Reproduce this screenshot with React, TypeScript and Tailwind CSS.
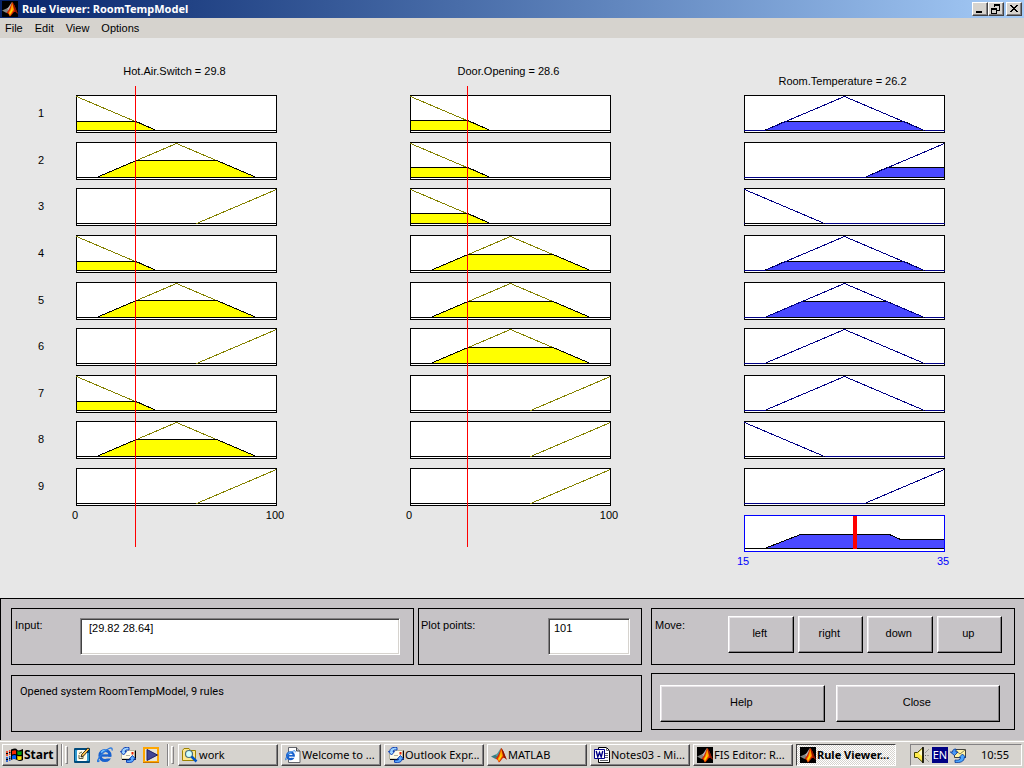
import { useState } from "react";
import type { ReactNode } from "react";
import clsx from "clsx";

type Shape = "low" | "mid" | "high";
type Rule = { hot: Shape; door: Shape; room: Shape };

const HOT = 29.82;
const DOOR = 28.64;

const rules: Rule[] = [
  { hot: "low", door: "low", room: "mid" },
  { hot: "mid", door: "low", room: "high" },
  { hot: "high", door: "low", room: "low" },
  { hot: "low", door: "mid", room: "mid" },
  { hot: "mid", door: "mid", room: "mid" },
  { hot: "high", door: "mid", room: "mid" },
  { hot: "low", door: "high", room: "mid" },
  { hot: "mid", door: "high", room: "low" },
  { hot: "high", door: "high", room: "high" },
];

// membership degree for v in 0..100
function degree(shape: Shape, v: number) {
  if (shape === "low") return Math.max(0, 1 - v / 40);
  if (shape === "high") return Math.max(0, (v - 60) / 40);
  return Math.max(0, 1 - Math.abs(v - 50) / 40);
}

const outlines: Record<Shape, [number, number][]> = {
  low: [[0, 1], [80, 0]],
  mid: [[20, 0], [100, 1], [180, 0]],
  high: [[120, 0], [200, 1]],
};

function clipped(shape: Shape, level: number): [number, number][] {
  const w = 80 * level;
  if (shape === "low") return [[0, 0], [0, level], [80 - w, level], [80, 0]];
  if (shape === "high") return [[120, 0], [120 + w, level], [200, level], [200, 0]];
  return [[20, 0], [20 + w, level], [180 - w, level], [180, 0]];
}

const toPoints = (pts: [number, number][]) =>
  pts.map(([x, y]) => `${x + 0.5},${Math.round(35 - y * 34) + 0.5}`).join(" ");

const raised =
  "border border-t-white border-l-white border-r-[#424142] border-b-[#424142] shadow-[inset_-1px_-1px_0_#848284]";
const figButton =
  "h-[37px] pb-[2px] pr-[2px] bg-[#c6c3c6] border border-t-white border-l-white border-r-black border-b-black shadow-[inset_-1px_-1px_0_#848284,inset_1px_1px_0_#e7e3e7]";
const sunken =
  "border border-t-[#848284] border-l-[#848284] border-r-white border-b-white shadow-[inset_1px_1px_0_#424142,inset_-1px_-1px_0_#d6d3ce]";

function Plot({ shape, level, output }: { shape: Shape; level: number; output?: boolean }) {
  const line = output ? "#000084" : "#848200";
  return (
    <svg
      viewBox="0 0 201 38"
      preserveAspectRatio="none"
      shapeRendering="crispEdges"
      className="block w-full h-[38px]"
    >
      <rect x="0.5" y="0.5" width="200" height="37" fill="white" stroke="black" />
      <path d="M0 35.5H201" stroke={output ? line : "black"} />
      <polygon points={toPoints(clipped(shape, level))} fill={output ? "#4a49ff" : "#ffff00"} stroke="black" />
      <polyline points={toPoints(outlines[shape])} fill="none" stroke={line} />
      {!output && level > 0 && (
        <polygon points={toPoints(clipped(shape, level))} fill="none" stroke="black" />
      )}
    </svg>
  );
}

function ResultPlot() {
  return (
    <svg
      viewBox="0 0 201 37"
      preserveAspectRatio="none"
      shapeRendering="crispEdges"
      className="block w-full h-[37px]"
    >
      <rect x="0.5" y="0.5" width="200" height="36" fill="white" stroke="#0000ff" />
      <path
        d="M0.5 33.5H20.5L56.5 19.5H145.5L156.5 24.5H200V33.5H20.5"
        fill="#4a49ff"
        stroke="black"
      />
      <path d="M200.5 0V37" stroke="#0000ff" />
      <rect x="109" y="1" width="4" height="33" fill="#ff0000" />
    </svg>
  );
}

function AxisLabels({ min, max, className }: { min: number; max: number; className?: string }) {
  return (
    <div className={clsx("flex justify-between -ml-[11px] -mr-[8px] leading-[14px]", className)}>
      <span className="w-5 text-center">{min}</span>
      <span className="w-5 text-center">{max}</span>
    </div>
  );
}

function InputColumn({ name, value, pick }: { name: string; value: number; pick: "hot" | "door" }) {
  return (
    <div className="relative">
      <h2 className="h-[57px] pb-[17px] pr-1 flex items-end justify-center leading-[14px] whitespace-nowrap">
        {name} = {value.toFixed(1)}
      </h2>
      <div className="h-[411px] flex flex-col justify-between">
        {rules.map((r, i) => (
          <Plot key={i} shape={r[pick]} level={degree(r[pick], value)} />
        ))}
      </div>
      <AxisLabels min={0} max={100} className="mt-[2px]" />
      {/* current value marker */}
      <div className="absolute top-12 -ml-px w-px h-[461px] bg-[#ff0000]" style={{ left: `${value}%` }} />
    </div>
  );
}

function MatlabIcon({ dark }: { dark?: boolean }) {
  return (
    <svg viewBox="0 0 16 16" className="w-4 h-4 shrink-0">
      {dark && <path d="M0 0h16v16H0z" fill="#000" />}
      <path d="M0 9.5 4.5 7.5 7 9.5 4.5 12z" fill={dark ? "#848684" : "#3a7d84"} />
      <path d="M4.5 7.5C7 7 8 3 10.2 1L8.5 8 7 10z" fill={dark ? "#b5b2b5" : "#4a9a9c"} />
      <path d="M10.2 1C8.5 4 8.7 7 4.5 12c2 0 2.2 1.5 3.4 3.5 2.2-1 3.2-4.8 5.1-4.7 1 .1 2 1 3 2C14 9 12.5 3 10.2 1z" fill="#d62800" />
      <path d="M10.2 1C9.5 5 9 8 6.5 12l1.4 3c1.8-2 2.6-5 4.1-6z" fill="#ff8200" />
      <path d="M10.2 4 9.2 9 7.3 12l.7 1.5 2.6-4z" fill="#ffdb00" />
      <path d="M10.2 1C12.5 3 14 9 16 13c-1.2-1.2-2-2-3-2.2z" fill="#8c1400" />
    </svg>
  );
}

function IeIcon({ page }: { page?: boolean }) {
  return (
    <svg viewBox="0 0 16 16" className="w-4 h-4 shrink-0">
      {page && <path d="M3.5.5h8L15 4v11.5H3.5z" fill="#fff" stroke="#63656b" />}
      {page && <path d="M11.5.5V4H15" fill="#c6c3c6" stroke="#42454a" />}
      <g transform={page ? "translate(0 3) scale(.68)" : undefined}>
        <circle cx="8" cy="8.5" r="5" fill="none" stroke="#1861ce" strokeWidth="3.2" />
        <path d="M4 8.5h9" stroke="#1861ce" strokeWidth="2.4" />
        <path d="M10 9.9h6v1.6h-6z" fill={page ? "#fff" : "#d6d3ce"} />
        <path d="M4 5.5Q6 3 9.5 3.3" stroke="#73c3ff" strokeWidth="1.3" fill="none" />
        <path d="M2.5 13.5C-1 17 .5 11 6 6S16-1 15 3.5" stroke="#2979de" strokeWidth="1.3" fill="none" />
      </g>
    </svg>
  );
}

function OutlookIcon() {
  return (
    <svg viewBox="0 0 16 16" className="w-4 h-4 shrink-0">
      <path d="M1.5 3.5h13v8.500h-13z" fill="#fffbe7" stroke="#b5b29c" />
      <path d="M15.5 3.5v9H2" stroke="#000" fill="none" />
      <path d="M6 8.5h4" stroke="#b5b29c" />
      <path d="M11.5 5h2v2.500h-2z" fill="#e72000" />
      <path d="M9 .5C5 0 1.800 1 1.800 4.500H.4L3.500 8 6.600 4.500H5C5 3 6.500 2.800 9 3z" fill="#9cd3ff" stroke="#1041b5" />
      <path d="M6.500 15.300c4.500.7 7.500-.3 7.500-3.300h1.500L12.500 8.500 9.300 12h1.500c0 1.300-2 1.300-4.300 1z" fill="#5aaaff" stroke="#1041b5" />
    </svg>
  );
}

function DesktopIcon() {
  return (
    <svg viewBox="0 0 16 16" className="w-4 h-4 shrink-0">
      <rect x="0" y="1" width="16" height="15" rx="1" fill="#004a7b" />
      <path d="M1 3h3v11H1zM13 6h2v8h-2z" fill="#319ace" />
      <path d="M3.5 3.5h9v10h-9z" fill="#fffbde" stroke="#fff" />
      <path d="M5 6.5 8 5M5 8v3.5h4V8" stroke="#63614a" fill="none" />
      <path d="m7 10 .8-2.7L14 .8l1.500 1.500L9.500 9z" fill="#ffc34a" stroke="#000" strokeWidth=".8" />
    </svg>
  );
}

function MediaIcon() {
  return (
    <svg viewBox="0 0 16 16" className="w-4 h-4 shrink-0">
      <path d="M1 1h14v14H1z" fill="#e7e3d6" stroke="#ffa600" strokeWidth="2" />
      <path d="M0 15.5h16" stroke="#c67500" />
      <path d="M4 2.5 14.5 8 4 13.5z" fill="#424594" stroke="#212063" />
    </svg>
  );
}

function FolderIcon() {
  return (
    <svg viewBox="0 0 16 16" className="w-4 h-4 shrink-0">
      <path d="M.5 3.5 2 1.5h5l1.500 2h5v10H.5z" fill="#ffe78c" stroke="#9c8200" />
      <circle cx="7" cy="7" r="3.5" fill="#ceffff" stroke="#4a6d7b" strokeWidth="1.2" />
      <path d="m9.5 9.5 5 5" stroke="#0055c6" strokeWidth="2.5" />
    </svg>
  );
}

function WordIcon() {
  return (
    <svg viewBox="0 0 16 16" className="w-4 h-4 shrink-0">
      <path d="M4.5.5h8l3 3v12h-11z" fill="#fff" stroke="#000" />
      <path d="M12.5.5v3h3M11 6.5h3M11 8.5h3M11 10.5h3M6 13.5h8" stroke="#63656b" fill="none" />
      <path d="M.5 2.5h10v9H.5z" fill="#fff" stroke="#000084" />
      <path d="m2.200 4 1.600 6L5.500 5.500 7.200 10l1.600-6" stroke="#000084" strokeWidth="1.4" fill="none" />
    </svg>
  );
}

function FlagIcon() {
  return (
    <svg viewBox="0 0 17 16" className="w-[17px] h-4 shrink-0">
      <path d="M5 2.5Q10 .5 11 2.5T17 2v11Q14 15 11 13t-6 0z" fill="#000" />
      <path d="M6 4q2.500-1.300 4-.5v3.700Q8 6.500 6 7.500z" fill="#f72800" />
      <path d="M11.300 4q2.200 1 4.300 0v3.700q-2 .8-4.300-.2z" fill="#00a608" />
      <path d="M6 8.700q2.500-1 4-.3v3.700q-2-.8-4 .2z" fill="#0061ff" />
      <path d="M11.300 8.700q2.200 1 4.300.2v3.700q-2 .8-4.300-.2z" fill="#ffdf00" />
      <path d="M3 4h1.500M3 7h1.500M0 5h2M0 8h2" stroke="#f72800" strokeWidth="1.5" />
      <path d="M3 10h1.500M3 13h1.500M0 11h2M0 14h2" stroke="#0041c6" strokeWidth="1.5" />
      <path d="M3 5.500h1.500M0 6.500h2M3 11.500h1.500M0 12.500h2" stroke="#000" />
    </svg>
  );
}

function SpeakerIcon() {
  return (
    <svg viewBox="0 0 16 16" className="w-4 h-4 shrink-0">
      <path d="M.5 5.5h3L9 .5v15l-5.500-5h-3z" fill="#ffeb4a" stroke="#424100" />
      <path d="M9 0v16" stroke="#000" strokeWidth="1.5" />
      <path d="m4.500 6 3.500-3.500V9z" fill="#fffbce" />
      <path d="M11 8.500h1M13.500 8.500h1M11.500 5.500l1-1M13.500 3.500l1-1M11.500 11.500l1 1M13.500 13.500l1 1" stroke="#636163" />
    </svg>
  );
}

function TrayMailIcon() {
  return (
    <svg viewBox="0 0 16 16" className="w-4 h-4 shrink-0">
      <path d="M4.500 2.500h11v8h-11z" fill="#fff3a5" stroke="#42413a" />
      <path d="m5 3 5 4 5-4" fill="none" stroke="#84825a" />
      <path d="M6.500 5C4 5 3 6 3 8H.8L5 11.500 8.500 8h-2z" fill="#4a9af7" stroke="#003494" strokeWidth=".8" transform="translate(-.5 -3)" />
      <path d="M5 13c3 .5 5.500 0 5.500-2.500H9L12.500 7l3.300 3.500h-1.500c0 4-4 5.500-9.300 5z" fill="#4aa6ff" stroke="#003494" strokeWidth=".8" />
    </svg>
  );
}

function CaptionButton({ label, children }: { label: string; children: ReactNode }) {
  return (
    <button aria-label={label} className={clsx("w-4 h-[14px] bg-[#d6d3ce] flex items-center justify-center", raised)}>
      <svg viewBox="0 0 12 10" className="w-3 h-[10px]" shapeRendering="crispEdges" fill="none" stroke="black">
        {children}
      </svg>
    </button>
  );
}

const tasks: { label: string; icon: ReactNode; active?: boolean }[] = [
  { label: "work", icon: <FolderIcon /> },
  { label: "Welcome to ...", icon: <IeIcon page /> },
  { label: "Outlook Expr...", icon: <OutlookIcon /> },
  { label: "MATLAB", icon: <MatlabIcon /> },
  { label: "Notes03 - Mi...", icon: <WordIcon /> },
  { label: "FIS Editor: R...", icon: <MatlabIcon dark /> },
  { label: "Rule Viewer...", icon: <MatlabIcon dark />, active: true },
];

function Taskbar() {
  return (
    <footer className="h-7 bg-[#d6d3ce] border-t border-[#d6d3ce] shadow-[inset_0_1px_0_#fff] pt-[3px] pl-[2px] pr-[2px] flex items-start font-['Noto_Sans',sans-serif] text-[11px] leading-[14px]">
      <button className={clsx("w-14 h-[22px] shrink-0 flex items-center pl-[3px] gap-px font-bold text-[12px]", raised)}>
        <FlagIcon />
        Start
      </button>
      <div className="ml-[3px] w-[2px] h-[22px] border-l border-l-[#848284] border-r border-r-white" />
      <div className="ml-[2px] mt-[2px] w-[3px] h-[18px] border border-t-white border-l-white border-r-[#848284] border-b-[#848284]" />
      <div className="ml-[6px] h-[22px] flex items-center gap-[7px]">
        <button aria-label="Show Desktop"><DesktopIcon /></button>
        <button aria-label="Internet Explorer"><IeIcon /></button>
        <button aria-label="Outlook Express"><OutlookIcon /></button>
        <button aria-label="Media Player"><MediaIcon /></button>
      </div>
      <div className="ml-[8px] w-[2px] h-[22px] border-l border-l-[#848284] border-r border-r-white" />
      <div className="ml-[2px] mt-[2px] w-[3px] h-[18px] border border-t-white border-l-white border-r-[#848284] border-b-[#848284]" />
      <nav className="ml-1 mr-[14px] flex-1 min-w-0 grid grid-cols-7 gap-[3px]">
        {tasks.map((t) => (
          <button
            key={t.label}
            className={clsx(
              "h-[22px] min-w-0 flex items-center pl-[3px] gap-px overflow-hidden whitespace-nowrap",
              t.active
                ? "border border-t-[#424142] border-l-[#424142] border-r-white border-b-white font-bold bg-[repeating-conic-gradient(#fff_0_25%,#d6d3ce_0_50%)] bg-[length:2px_2px]"
                : raised
            )}
          >
            {t.icon}
            {t.label}
          </button>
        ))}
      </nav>
      <div className="w-28 h-[22px] shrink-0 flex items-center pl-[3px] border border-t-[#848284] border-l-[#848284] border-r-white border-b-white">
        <SpeakerIcon />
        <span className="ml-[2px] w-4 h-4 bg-[#000084] text-white text-center leading-4">EN</span>
        <span className="ml-[2px]"><TrayMailIcon /></span>
        <span className="ml-auto pr-3">10:55</span>
      </div>
    </footer>
  );
}

export default function App() {
  const [input, setInput] = useState("[29.82 28.64]");
  const [points, setPoints] = useState("101");

  return (
    <div className="min-h-screen flex flex-col bg-[#e7e7e7] text-black text-[11px] font-['Liberation_Sans',Arial,sans-serif]">
      <header className="h-[18px] pl-[2px] pr-[2px] flex items-center bg-linear-to-r from-[#08246b] to-[#a5cbf7]">
        <MatlabIcon dark />
        <h1 className="ml-1 flex-1 text-white font-bold text-[11px] leading-[18px] font-['Noto_Sans',sans-serif]">
          Rule Viewer: RoomTempModel
        </h1>
        <CaptionButton label="Minimize">
          <path d="M2 8h6" strokeWidth="2" />
        </CaptionButton>
        <CaptionButton label="Restore">
          <path d="M4 1h6M2 5h5" strokeWidth="2" />
          <path d="M4.5 1v2M9.500 1v5.500H7M1.500 4v5.500h5V4" />
        </CaptionButton>
        <span className="w-[2px]" />
        <CaptionButton label="Close">
          <path d="M2 1.5h2M8 1.5h2M3 2.5h2M7 2.5h2M4 3.5h4M5 4.5h2M4 5.5h4M3 6.5h2M7 6.5h2M2 7.5h2M8 7.5h2" />
        </CaptionButton>
      </header>

      <nav className="h-5 pl-[5px] flex items-center gap-3 bg-[#d6d3ce] leading-[14px]">
        <button>File</button>
        <button>Edit</button>
        <button>View</button>
        <button>Options</button>
      </nav>

      {/* rule plots */}
      <main className="flex-1 flex pr-[79px]">
        <div className="w-[76px] shrink-0 pt-[56px] pl-[6px]">
          <ol className="h-[411px] flex flex-col justify-between text-center">
            {rules.map((_, i) => (
              <li key={i} className="h-[38px] leading-[38px]">{i + 1}</li>
            ))}
          </ol>
        </div>
        <div className="flex-1 grid grid-cols-3 gap-x-[133px]">
          <InputColumn name="Hot.Air.Switch" value={HOT} pick="hot" />
          <InputColumn name="Door.Opening" value={DOOR} pick="door" />
          <div>
            <h2 className="h-[57px] pb-[7px] pr-1 flex items-end justify-center leading-[14px] whitespace-nowrap">
              Room.Temperature = 26.2
            </h2>
            <div className="h-[411px] flex flex-col justify-between">
              {rules.map((r, i) => (
                <Plot
                  key={i}
                  shape={r.room}
                  level={Math.min(degree(r.hot, HOT), degree(r.door, DOOR))}
                  output
                />
              ))}
            </div>
            <div className="mt-[9px]">
              <ResultPlot />
            </div>
            <AxisLabels min={15} max={35} className="mt-[2px] text-[#0000ff]" />
          </div>
        </div>
      </main>

      {/* controls */}
      <section className="h-[142px] border-t border-l border-black bg-[#c6c3c6] pt-[9px] pl-[10px] pr-[9px] grid grid-cols-[631fr_364fr] gap-x-[9px]">
        <div className="flex flex-col gap-[10px]">
          <div className="grid grid-cols-[403fr_224fr] gap-1">
            <div className="h-[57px] border border-black pl-[3px] pr-[13px] pt-[9px] flex">
              <label htmlFor="input" className="w-[65px] leading-[14px]">Input:</label>
              <input
                id="input"
                value={input}
                onChange={(e) => setInput(e.target.value)}
                className={clsx("flex-1 min-w-0 h-[37px] bg-white pl-2 pb-[18px] outline-none", sunken)}
              />
            </div>
            <div className="h-[57px] border border-black pl-[2px] pr-[11px] pt-[9px] flex justify-between">
              <label htmlFor="points" className="leading-[14px]">Plot points:</label>
              <input
                id="points"
                value={points}
                onChange={(e) => setPoints(e.target.value)}
                className={clsx("w-[82px] h-[37px] bg-white pl-[5px] pb-[18px] outline-none", sunken)}
              />
            </div>
          </div>
          <p className="h-[57px] border border-black pl-2 pt-[9px] leading-[14px] font-['Roboto',sans-serif]">
            Opened system RoomTempModel, 9 rules
          </p>
        </div>
        <div className="flex flex-col gap-2">
          <div className="h-[57px] border border-black pl-[3px] pr-3 pt-[7px] flex">
            <span className="w-[73px] pt-[2px] leading-[14px]">Move:</span>
            <div className="flex-1 grid grid-cols-4 gap-1">
              <button className={figButton}>left</button>
              <button className={figButton}>right</button>
              <button className={figButton}>down</button>
              <button className={figButton}>up</button>
            </div>
          </div>
          <div className="h-[57px] border border-black pl-2 pr-[14px] pt-[11px] grid grid-cols-2 gap-[11px]">
            <button className={figButton}>Help</button>
            <button className={figButton}>Close</button>
          </div>
        </div>
      </section>

      <Taskbar />
    </div>
  );
}
